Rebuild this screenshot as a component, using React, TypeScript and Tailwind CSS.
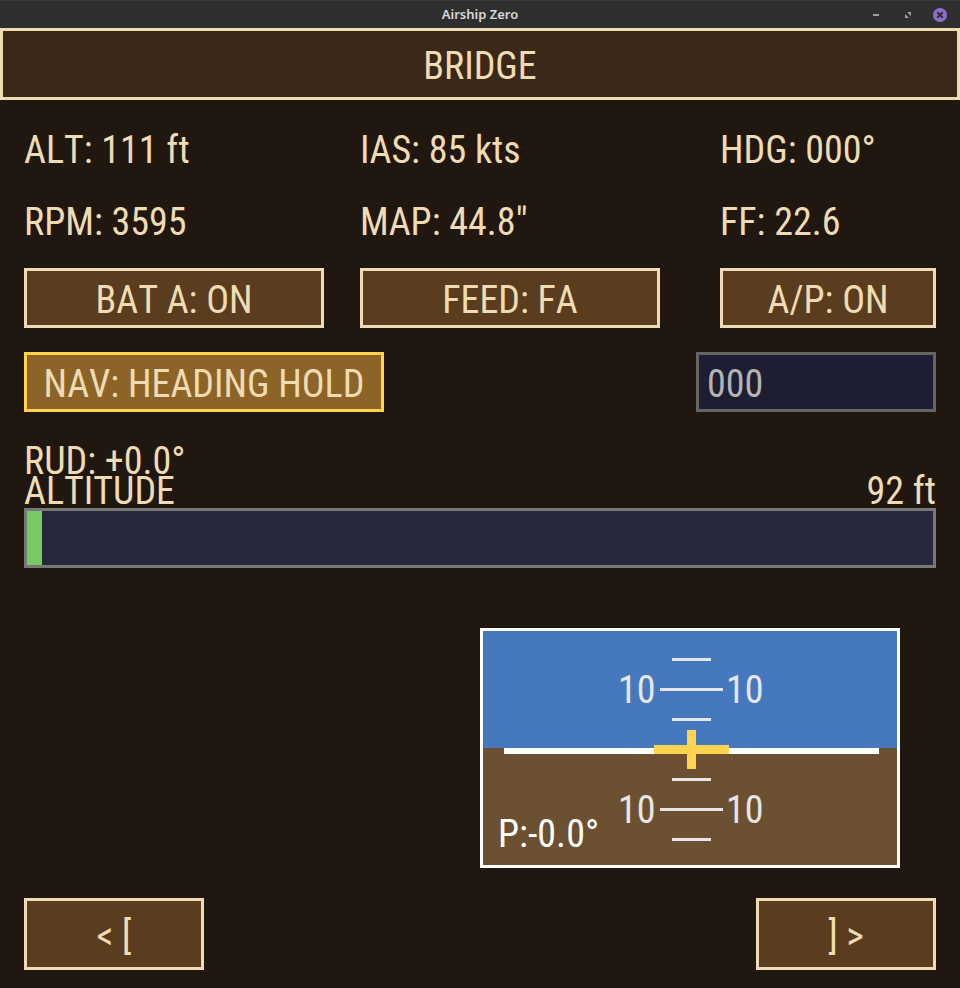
import type { ReactNode } from "react";

const panelFont =
  "font-['Roboto_Condensed','Liberation_Sans_Narrow',sans-serif] [font-kerning:none]";

function Readout({ children }: { children: ReactNode }) {
  return <p className="whitespace-nowrap leading-9">{children}</p>;
}

function PanelButton({ children, className = "" }: { children: ReactNode; className?: string }) {
  return (
    <button
      type="button"
      className={`flex items-center justify-center whitespace-pre border-3 border-[#f0dcb4] bg-[#5a3c1e] pt-1 ${className}`}
    >
      {children}
    </button>
  );
}

function TitleBar() {
  return (
    <header className="relative flex h-7 items-center justify-center border-t border-[#3a3a3a] bg-[#2f2f2f] font-['Noto_Sans',sans-serif] text-[13px] font-semibold text-[#dadada]">
      <span>Airship Zero</span>
      <div className="absolute inset-y-0 right-3 flex items-center gap-4">
        <button type="button" aria-label="Minimize" className="size-4">
          <svg viewBox="0 0 16 16" className="size-4">
            <rect x="5" y="7" width="6" height="2" fill="#a0a0a0" />
          </svg>
        </button>
        <button type="button" aria-label="Restore" className="size-4">
          <svg viewBox="0 0 16 16" className="size-4" fill="#a0a0a0">
            <path d="M7 5h4v4L9.7 7.7 9 7z" />
            <path d="M5 7v4h4L7.7 9.7 7 9z" />
          </svg>
        </button>
        <button type="button" aria-label="Close" className="size-4">
          <svg viewBox="0 0 16 16" className="size-4 overflow-visible">
            <circle cx="8" cy="8" r="7" fill="#8f6fce" />
            <path d="M5.2 5.2l5.6 5.6M10.8 5.2l-5.6 5.6" stroke="#2f2f2f" strokeWidth="2" />
          </svg>
        </button>
      </div>
    </header>
  );
}

const ticks = [
  { y: 30, long: false },
  { y: 60, long: true },
  { y: 90, long: false },
  { y: 150, long: false },
  { y: 180, long: true },
  { y: 210, long: false },
];

function AttitudeIndicator() {
  return (
    <svg viewBox="0 0 420 240" className="h-60 w-[420px]" role="img" aria-label="Attitude indicator">
      <rect width="420" height="240" fill="#ffffff" />
      <rect x="3" y="3" width="414" height="117" fill="#4678be" />
      <rect x="3" y="120" width="414" height="117" fill="#6c5032" />
      <rect x="24" y="120" width="375" height="6" fill="#ffffff" />
      {ticks.map((t) => (
        <g key={t.y} fill="#e6e6e6">
          <rect x={t.long ? 180 : 192} y={t.y} width={t.long ? 63 : 39} height="3" />
          {t.long && (
            <>
              <text x="138" y={t.y + 15}>10</text>
              <text x="246" y={t.y + 15}>10</text>
            </>
          )}
        </g>
      ))}
      <rect x="174" y="117" width="75" height="9" fill="#ffd250" />
      <rect x="207" y="102" width="9" height="39" fill="#ffd250" />
      <text x="18" y="219" fill="#ffffff">P:-0.0°</text>
    </svg>
  );
}

export default function App() {
  return (
    <div className="flex min-h-screen flex-col bg-[#201711]">
      <TitleBar />
      <main className={`flex flex-1 flex-col text-[38px] leading-9 text-[#f0dcb4] ${panelFont}`}>
        <h1 className="flex h-18 items-center justify-center border-3 border-[#f0dcb4] bg-[#3c2818] pt-1">
          BRIDGE
        </h1>

        <div className="flex flex-1 flex-col px-6 pt-8 pb-[18px]">
          <section className="grid grid-cols-[28fr_30fr_18fr] gap-y-9">
            <Readout>ALT: 111 ft</Readout>
            <Readout>IAS: 85 kts</Readout>
            <Readout>HDG: 000°</Readout>
            <Readout>RPM: 3595</Readout>
            <Readout>MAP: 44.8"</Readout>
            <Readout>FF: 22.6</Readout>
          </section>

          <section className="mt-7 grid grid-cols-[28fr_30fr_18fr]">
            <PanelButton className="mr-9 h-15">BAT A: ON</PanelButton>
            <PanelButton className="mr-15 h-15">FEED: FA</PanelButton>
            <PanelButton className="h-15">A/P: ON</PanelButton>
          </section>

          <section className="mt-6 flex justify-between">
            <button
              type="button"
              className="h-15 w-90 whitespace-nowrap border-3 border-[#ffd250] bg-[#8c6428] pt-1"
            >
              NAV: HEADING HOLD
            </button>
            <input
              aria-label="Target heading"
              defaultValue="000"
              className="h-15 w-60 border-3 border-[#646464] bg-[#1e1e32] px-2 pt-1 text-[#b4b4b4] outline-none"
            />
          </section>

          <p className="mt-[34px] leading-[30px]">RUD: +0.0°</p>
          <section>
            <div className="flex justify-between leading-[30px]">
              <span id="altitude-label">ALTITUDE</span>
              <span>92 ft</span>
            </div>
            <div
              role="meter"
              aria-labelledby="altitude-label"
              aria-valuenow={92}
              aria-valuemin={0}
              aria-valuemax={5500}
              className="mt-0.5 h-15 border-3 border-[#787878] bg-[#28283c]"
            >
              <div className="h-full w-[15px] bg-[#78c864]" />
            </div>
          </section>

          <div className="mt-15 flex justify-end pr-9">
            <AttitudeIndicator />
          </div>

          <nav className="mt-auto flex justify-between pt-[30px]">
            <PanelButton className="h-18 w-45">{"< ["}</PanelButton>
            <PanelButton className="h-18 w-45">{"] >"}</PanelButton>
          </nav>
        </div>
      </main>
    </div>
  );
}
